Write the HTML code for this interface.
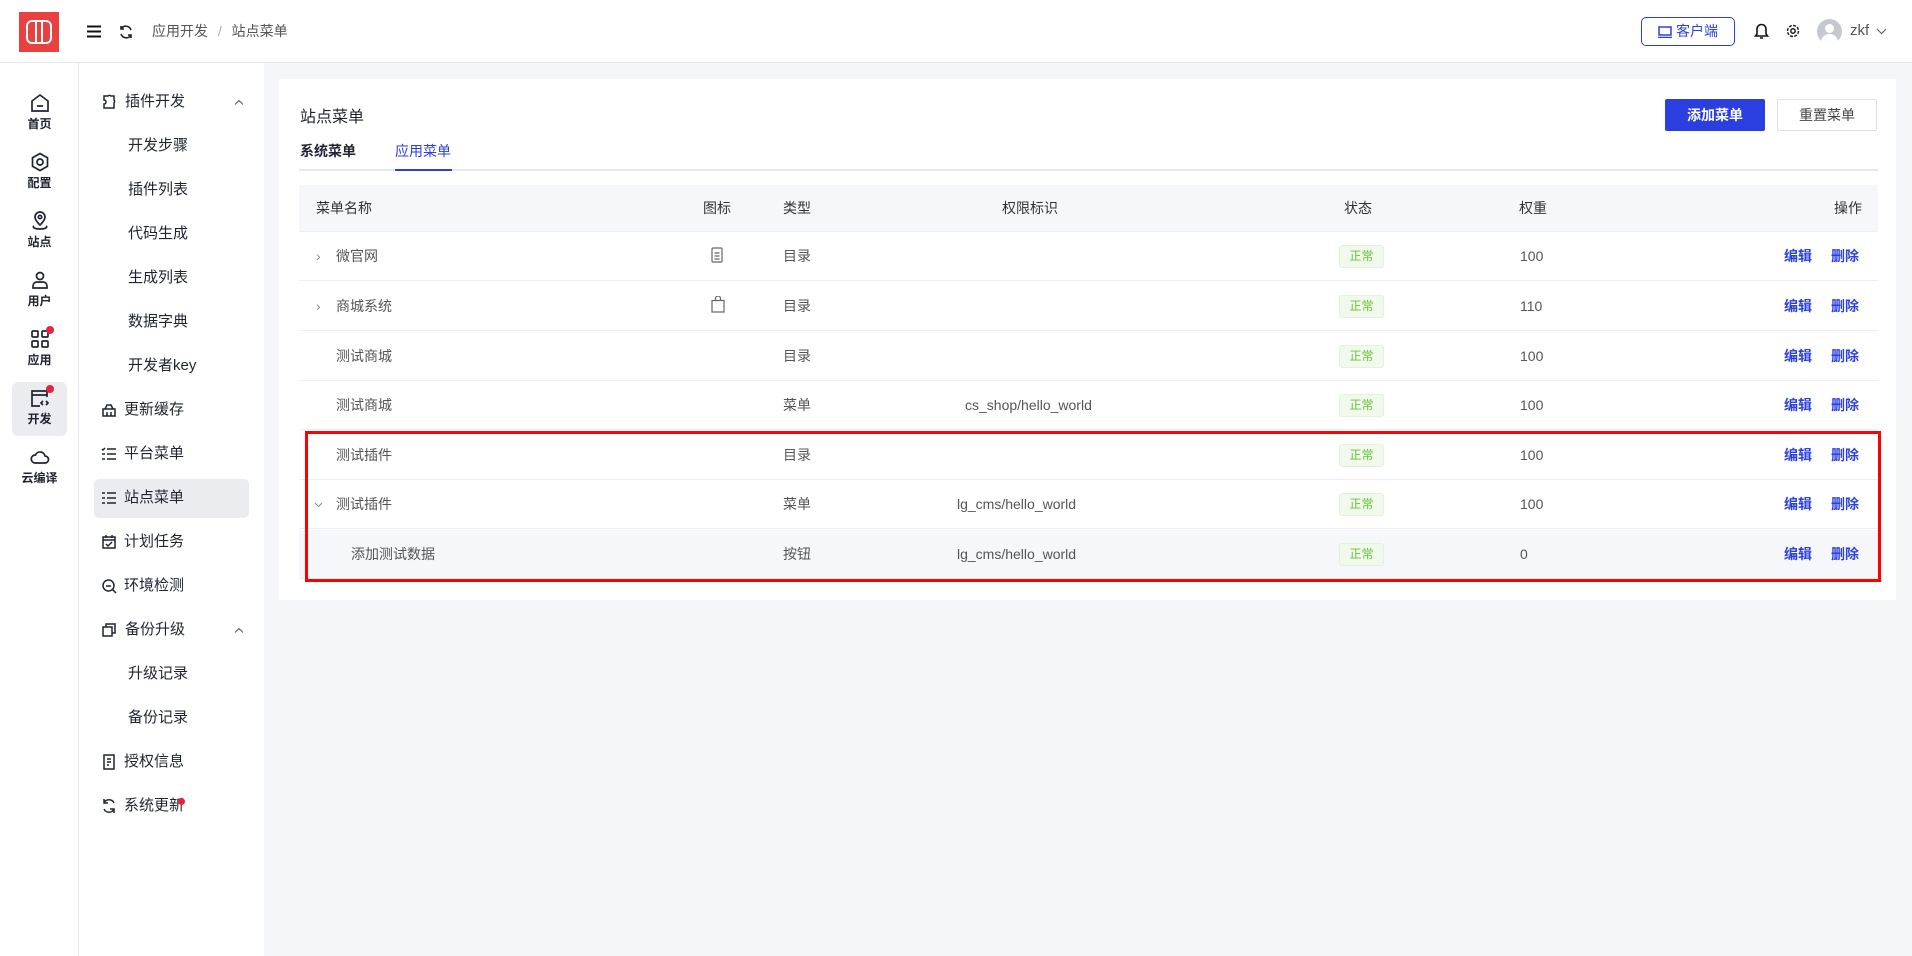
<!DOCTYPE html>
<html><head><meta charset="utf-8"><style>
*{margin:0;padding:0;box-sizing:border-box}
body{width:1912px;height:956px;overflow:hidden;font-family:"Liberation Sans","Noto Sans CJK SC",sans-serif;background:#f5f6f8;color:#303133;position:relative}
.abs{position:absolute}
.hdr{left:0;top:0;width:1912px;height:63px;background:#fff;border-bottom:1px solid #e4e6eb}
.rail{left:0;top:63px;width:79px;height:893px;background:#fff;border-right:1px solid #e4e6eb}
.side{left:79px;top:63px;width:185px;height:893px;background:#fff}
.ri{position:absolute;left:12px;width:55px;text-align:center;font-size:12px;font-weight:bold;color:#1f2430}
.ri svg{display:block;margin:0 auto 2px}
.si{position:absolute;left:0;width:185px;font-size:15px;color:#1f2430;height:40px;line-height:40px}
.si svg{position:absolute;left:22px;top:12px}
.card{left:279px;top:79px;width:1617px;height:521px;background:#fff}
.th,.tr{position:absolute;left:299px;width:1579px;height:49px;font-size:14px;color:#555;border-bottom:1px solid #ebeef5}
.th{background:#f5f7fa;color:#333;height:47px}
.c{position:absolute;top:0;line-height:49px;white-space:nowrap}
.th .c{line-height:47px}
.tag{position:absolute;top:13px;left:1040px;width:45px;height:23px;line-height:21px;text-align:center;font-size:12px;color:#67c23a;background:#f0f9eb;border:1px solid #e1f3d8;border-radius:3px}
.a{color:#2b3fe0;font-weight:bold}
</style></head><body>
<div class="abs hdr">
  <div class="abs" style="left:19px;top:12px;width:40px;height:40px;background:#e94040"><div class="abs" style="left:7px;top:8px;width:26px;height:24px;border:2px solid #fff;border-radius:6px"></div><div class="abs" style="left:16px;top:8px;width:2px;height:24px;background:#fff"></div><div class="abs" style="left:22px;top:8px;width:2px;height:24px;background:#fff"></div></div>
  <svg class="abs" style="left:87px;top:25px" width="14" height="13"><path d="M0 1.5h14M0 6.5h14M0 11.5h14" stroke="#111" stroke-width="2"/></svg>
  <svg class="abs" style="left:119px;top:25px" width="14" height="14" fill="none" stroke="#222" stroke-width="1.6"><path d="M12 5A5.5 5.5 0 0 0 2 4M2 9a5.5 5.5 0 0 0 10 1M2 1v3h3M12 13v-3H9"/></svg>
  <div class="abs" style="left:152px;top:21px;font-size:14px;color:#555">应用开发 <span style="color:#aaa;margin:0 6px">/</span> 站点菜单</div>
  <div class="abs" style="left:1641px;top:17px;width:94px;height:29px;border:1px solid #2b3fe0;border-radius:5px;color:#2b3fe0;font-size:14px;line-height:27px;padding-left:34px">客户端
    <svg class="abs" style="left:16px;top:8px" width="14" height="12" fill="none" stroke="#2b3fe0" stroke-width="1.5"><rect x="1" y="1" width="12" height="8"/><path d="M0 11.5h14"/></svg></div>
  <svg class="abs" style="left:1754px;top:22px" width="15" height="17" fill="none" stroke="#111" stroke-width="1.6"><path d="M3 12V7a4.5 4.5 0 0 1 9 0v5l1.5 2h-12z M6 16h3"/></svg>
  <svg class="abs" style="left:1786px;top:24px" width="14" height="14" fill="none" stroke="#222" stroke-width="1.5"><circle cx="7" cy="7" r="2.2"/><circle cx="7" cy="7" r="5.5" stroke-dasharray="3 1.3"/></svg>
  <div class="abs" style="left:1817px;top:19px;width:25px;height:25px;border-radius:50%;background:#c5c8d0;overflow:hidden"><div class="abs" style="left:8px;top:5px;width:9px;height:9px;border-radius:50%;background:#fff"></div><div class="abs" style="left:4px;top:15px;width:17px;height:12px;border-radius:8px 8px 0 0;background:#fff"></div></div>
  <div class="abs" style="left:1850px;top:22px;font-size:15px;color:#555">zkf</div>
  <svg class="abs" style="left:1876px;top:28px" width="11" height="7" fill="none" stroke="#666" stroke-width="1.2"><path d="M1 1l4.5 4.5L10 1"/></svg>
</div>

<div class="abs rail">
  <div class="ri" style="top:30px"><svg width="20" height="20" fill="none" stroke="#1f2430" stroke-width="1.7"><path d="M2 8l8-6 8 6v10H2z M7 13h6"/></svg>首页</div>
  <div class="ri" style="top:89px"><svg width="20" height="20" fill="none" stroke="#1f2430" stroke-width="1.7"><path d="M10 1.5l7.5 4.3v8.4L10 18.5l-7.5-4.3V5.8z"/><circle cx="10" cy="10" r="3"/></svg>配置</div>
  <div class="ri" style="top:148px"><svg width="20" height="20" fill="none" stroke="#1f2430" stroke-width="1.7"><path d="M10 14s5-4.5 5-8a5 5 0 0 0-10 0c0 3.5 5 8 5 8z M4 15c-2 1 0 3 6 3s8-2 6-3"/><circle cx="10" cy="6" r="1.7"/></svg>站点</div>
  <div class="ri" style="top:207px"><svg width="20" height="20" fill="none" stroke="#1f2430" stroke-width="1.7"><circle cx="10" cy="6" r="3.5"/><path d="M3 18v-2a4 4 0 0 1 4-4h6a4 4 0 0 1 4 4v2z"/></svg>用户</div>
  <div class="ri" style="top:266px"><svg width="20" height="20" fill="none" stroke="#1f2430" stroke-width="1.7"><rect x="2" y="2" width="6" height="6" rx="1"/><rect x="12" y="2" width="6" height="6" rx="1"/><rect x="2" y="12" width="6" height="6" rx="1"/><rect x="12" y="12" width="6" height="6" rx="1"/></svg>应用<span class="abs" style="left:34px;top:-3px;width:8px;height:8px;border-radius:50%;background:#e5243f"></span></div>
  <div class="abs" style="left:12px;top:319px;width:55px;height:54px;background:#ebecf0;border-radius:6px"></div>
  <div class="ri" style="top:325px"><svg width="20" height="20" fill="none" stroke="#1f2430" stroke-width="1.7"><path d="M17 9V3H2v15h8 M2 7h15 M13 13l-2 2 2 2 M16 13l2 2-2 2"/></svg>开发<span class="abs" style="left:34px;top:-3px;width:8px;height:8px;border-radius:50%;background:#e5243f"></span></div>
  <div class="ri" style="top:384px"><svg width="20" height="20" fill="none" stroke="#1f2430" stroke-width="1.7"><path d="M5 16h10a3.5 3.5 0 0 0 0-7 5 5 0 0 0-9.5-1A4 4 0 0 0 5 16z"/></svg>云编译</div>
</div>

<div class="abs side">
  <div class="si" style="top:19px;padding-left:46px"><svg width="16" height="16" fill="none" stroke="#1f2430" stroke-width="1.5"><path d="M3 2h4a2 2 0 0 1 3 0h3v4a2 2 0 0 1 0 3v5H3v-4a2 2 0 0 0 0-4z"/></svg>插件开发<svg style="left:155px;top:17px" width="10" height="6" fill="none" stroke="#555"><path d="M1 5.5l4-4 4 4"/></svg></div>
  <div class="si" style="top:63px;padding-left:49px">开发步骤</div>
  <div class="si" style="top:107px;padding-left:49px">插件列表</div>
  <div class="si" style="top:151px;padding-left:49px">代码生成</div>
  <div class="si" style="top:195px;padding-left:49px">生成列表</div>
  <div class="si" style="top:239px;padding-left:49px">数据字典</div>
  <div class="si" style="top:283px;padding-left:49px">开发者key</div>
  <div class="si" style="top:327px;padding-left:45px"><svg width="16" height="16" fill="none" stroke="#1f2430" stroke-width="1.5"><path d="M2 7h12v7H2z M4 7l2-4h4l2 4 M6 10v4 M10 10v4"/></svg>更新缓存</div>
  <div class="si" style="top:371px;padding-left:45px"><svg width="16" height="16" fill="none" stroke="#1f2430" stroke-width="1.5"><path d="M6 3h9M6 8h9M6 13h9M1 3l1 1 2-2M1 8h3M1 13h3"/></svg>平台菜单</div>
  <div class="abs" style="left:15px;top:416px;width:155px;height:39px;background:#ebecf0;border-radius:5px"></div>
  <div class="si" style="top:415px;padding-left:45px"><svg width="16" height="16" fill="none" stroke="#1f2430" stroke-width="1.5"><path d="M6 3h9M6 8h9M6 13h9M1 3h3M1 8h3M1 13h3"/></svg>站点菜单</div>
  <div class="si" style="top:459px;padding-left:45px"><svg width="16" height="16" fill="none" stroke="#1f2430" stroke-width="1.5"><rect x="2" y="3" width="12" height="11"/><path d="M2 6h12M5 1v3M11 1v3M5 10l2 2 4-4"/></svg>计划任务</div>
  <div class="si" style="top:503px;padding-left:45px"><svg width="16" height="16" fill="none" stroke="#1f2430" stroke-width="1.5"><circle cx="7.5" cy="7.5" r="5.5"/><path d="M11.5 11.5L15 15M5 8h5"/></svg>环境检测</div>
  <div class="si" style="top:547px;padding-left:46px"><svg width="16" height="16" fill="none" stroke="#1f2430" stroke-width="1.5"><rect x="2" y="5" width="9" height="9"/><path d="M5 5V2h9v9h-3"/></svg>备份升级<svg style="left:155px;top:17px" width="10" height="6" fill="none" stroke="#555"><path d="M1 5.5l4-4 4 4"/></svg></div>
  <div class="si" style="top:591px;padding-left:49px">升级记录</div>
  <div class="si" style="top:635px;padding-left:49px">备份记录</div>
  <div class="si" style="top:679px;padding-left:45px"><svg width="16" height="16" fill="none" stroke="#1f2430" stroke-width="1.5"><path d="M3 1h10v14H3z M6 5h4M6 8h4M6 11h2"/></svg>授权信息</div>
  <div class="si" style="top:723px;padding-left:45px"><svg width="16" height="16" fill="none" stroke="#1f2430" stroke-width="1.5"><path d="M13 5A5.5 5.5 0 0 0 3 5M3 11a5.5 5.5 0 0 0 10 0M3 1v4h4M13 15v-4H9"/></svg>系统更新<span class="abs" style="left:99px;top:12px;width:7px;height:7px;border-radius:50%;background:#e5243f"></span></div>
</div>

<div class="abs card"></div>
<div class="abs" style="left:300px;top:103px;font-size:16px;color:#1f2430">站点菜单</div>
<div class="abs" style="left:1665px;top:99px;width:100px;height:32px;background:#2b3fe0;border-radius:2px;color:#fff;font-size:14px;font-weight:bold;text-align:center;line-height:32px">添加菜单</div>
<div class="abs" style="left:1777px;top:99px;width:100px;height:32px;border:1px solid #dcdfe6;border-radius:2px;color:#444;font-size:14px;text-align:center;line-height:30px">重置菜单</div>
<div class="abs" style="left:300px;top:141px;font-size:14px;color:#1f2430;font-weight:bold">系统菜单</div>
<div class="abs" style="left:395px;top:141px;font-size:14px;color:#2b3fe0">应用菜单</div>
<div class="abs" style="left:299px;top:169px;width:1579px;height:2px;background:#e4e7ed"></div>
<div class="abs" style="left:395px;top:169px;width:57px;height:2px;background:#2b3fe0"></div>

<div class="th" style="top:185px"><span class="c" style="left:17px">菜单名称</span><span class="c" style="left:404px">图标</span><span class="c" style="left:484px">类型</span><span class="c" style="left:703px">权限标识</span><span class="c" style="left:1045px">状态</span><span class="c" style="left:1220px">权重</span><span class="c" style="left:1535px">操作</span></div>

<div class="tr" style="top:232px"><span class="c" style="left:17px;color:#888">›</span><span class="c" style="left:37px">微官网</span><svg class="abs" style="left:412px;top:15px" width="12" height="16" fill="none" stroke="#666" stroke-width="1.2"><rect x="1" y="1" width="10" height="14" rx="1"/><path d="M3.5 6h5M3.5 9h5M3.5 12h5"/></svg><span class="c" style="left:484px">目录</span><span class="tag">正常</span><span class="c" style="left:1221px">100</span><span class="c a" style="left:1485px">编辑</span><span class="c a" style="left:1532px">删除</span></div>
<div class="tr" style="top:282px"><span class="c" style="left:17px;color:#888">›</span><span class="c" style="left:37px">商城系统</span><svg class="abs" style="left:412px;top:14px" width="14" height="17" fill="none" stroke="#666" stroke-width="1.2"><rect x="1" y="4.5" width="12" height="11.5"/><path d="M4.5 4.5V2.5a2.5 2.5 0 0 1 5 0v2"/></svg><span class="c" style="left:484px">目录</span><span class="tag">正常</span><span class="c" style="left:1221px">110</span><span class="c a" style="left:1485px">编辑</span><span class="c a" style="left:1532px">删除</span></div>
<div class="tr" style="top:332px"><span class="c" style="left:37px">测试商城</span><span class="c" style="left:484px">目录</span><span class="tag">正常</span><span class="c" style="left:1221px">100</span><span class="c a" style="left:1485px">编辑</span><span class="c a" style="left:1532px">删除</span></div>
<div class="tr" style="top:381px"><span class="c" style="left:37px">测试商城</span><span class="c" style="left:484px">菜单</span><span class="c" style="left:666px">cs_shop/hello_world</span><span class="tag">正常</span><span class="c" style="left:1221px">100</span><span class="c a" style="left:1485px">编辑</span><span class="c a" style="left:1532px">删除</span></div>
<div class="tr" style="top:431px"><span class="c" style="left:37px">测试插件</span><span class="c" style="left:484px">目录</span><span class="tag">正常</span><span class="c" style="left:1221px">100</span><span class="c a" style="left:1485px">编辑</span><span class="c a" style="left:1532px">删除</span></div>
<div class="tr" style="top:480px"><svg class="abs" style="left:15px;top:22px" width="9" height="6" fill="none" stroke="#888"><path d="M1 1l3.5 3.5L8 1"/></svg><span class="c" style="left:37px">测试插件</span><span class="c" style="left:484px">菜单</span><span class="c" style="left:658px">lg_cms/hello_world</span><span class="tag">正常</span><span class="c" style="left:1221px">100</span><span class="c a" style="left:1485px">编辑</span><span class="c a" style="left:1532px">删除</span></div>
<div class="tr" style="top:530px;background:#f5f7fa"><span class="c" style="left:52px">添加测试数据</span><span class="c" style="left:484px">按钮</span><span class="c" style="left:658px">lg_cms/hello_world</span><span class="tag">正常</span><span class="c" style="left:1221px">0</span><span class="c a" style="left:1485px">编辑</span><span class="c a" style="left:1532px">删除</span></div>
<div class="abs" style="left:305px;top:431px;width:1576px;height:151px;border:3px solid #f00"></div>
</body></html>
